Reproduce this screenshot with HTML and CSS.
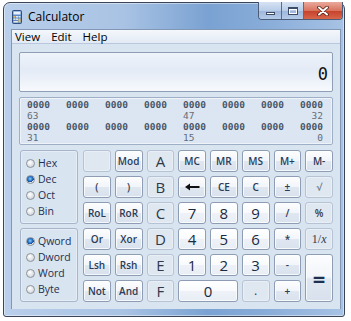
FILE: index.html
```html
<!DOCTYPE html>
<html lang="en">

<head>
    <meta charset="UTF-8">
    <title>Calculator</title>
    <link rel="stylesheet" href="styles.css">
</head>

<body>
    <div class="window">
        <div class="titlebar">
            <svg class="app-icon" width="10" height="14" viewBox="0 0 10 14">
                <rect x="0.5" y="0.5" width="9" height="13" rx="1" fill="#5b87c4" stroke="#2e4f80" />
                <rect x="1.5" y="1.5" width="7" height="3" fill="#e8f1fb" />
                <rect x="1.5" y="6" width="2" height="1.5" fill="#f3c24b" />
                <rect x="4" y="6" width="2" height="1.5" fill="#dfe9f6" />
                <rect x="6.5" y="6" width="2" height="1.5" fill="#dfe9f6" />
                <rect x="1.5" y="8.5" width="2" height="1.5" fill="#dfe9f6" />
                <rect x="4" y="8.5" width="2" height="1.5" fill="#dfe9f6" />
                <rect x="6.5" y="8.5" width="2" height="4" fill="#f3c24b" />
                <rect x="1.5" y="11" width="4.5" height="1.5" fill="#dfe9f6" />
            </svg>
            <span class="title">Calculator</span>
            <div class="caption">
                <div class="cap cap-min"><span class="min-bar"></span></div>
                <div class="cap cap-max"><span class="max-box"></span></div>
                <div class="cap cap-close">
                    <svg width="12" height="10" viewBox="0 0 12 10">
                        <path d="M2 1.5 L10 8.5 M10 1.5 L2 8.5" stroke="#5a2016" stroke-width="3.6" stroke-linecap="round" />
                        <path d="M2 1.5 L10 8.5 M10 1.5 L2 8.5" stroke="#ffffff" stroke-width="2" stroke-linecap="round" />
                    </svg>
                </div>
            </div>
        </div>

        <div class="client">
            <div class="menubar">
                <span>View</span>
                <span>Edit</span>
                <span>Help</span>
            </div>

            <div class="calc-body">
                <div class="display">0</div>

                <div class="bits">
                    <div class="bit-row val"><span>0000</span><span>0000</span><span>0000</span><span>0000</span><span>0000</span><span>0000</span><span>0000</span><span>0000</span></div>
                    <div class="bit-row"><span>63</span><span></span><span></span><span></span><span>47</span><span></span><span></span><span class="r">32</span></div>
                    <div class="bit-row val"><span>0000</span><span>0000</span><span>0000</span><span>0000</span><span>0000</span><span>0000</span><span>0000</span><span>0000</span></div>
                    <div class="bit-row"><span>31</span><span></span><span></span><span></span><span>15</span><span></span><span></span><span class="r">0</span></div>
                </div>

                <div class="keypad">
                    <div class="radio-group group-top">
                        <div class="radio"><span class="dot"></span>Hex</div>
                        <div class="radio"><span class="dot on"></span>Dec</div>
                        <div class="radio"><span class="dot"></span>Oct</div>
                        <div class="radio"><span class="dot"></span>Bin</div>
                    </div>
                    <div class="radio-group group-bottom">
                        <div class="radio"><span class="dot on"></span>Qword</div>
                        <div class="radio"><span class="dot"></span>Dword</div>
                        <div class="radio"><span class="dot"></span>Word</div>
                        <div class="radio"><span class="dot"></span>Byte</div>
                    </div>

                    <!-- row 1 -->
                    <div class="btn off"></div>
                    <div class="btn small">Mod</div>
                    <div class="btn off big">A</div>
                    <div class="btn small">MC</div>
                    <div class="btn small">MR</div>
                    <div class="btn small">MS</div>
                    <div class="btn small">M+</div>
                    <div class="btn small">M-</div>

                    <!-- row 2 -->
                    <div class="btn small">(</div>
                    <div class="btn small">)</div>
                    <div class="btn off big">B</div>
                    <div class="btn">
                        <svg width="15" height="8" viewBox="0 0 15 8">
                            <path d="M4 4 H14.5" stroke="#111" stroke-width="2" />
                            <path d="M0 4 L5 0.5 L5 7.5 Z" fill="#111" />
                        </svg>
                    </div>
                    <div class="btn small">CE</div>
                    <div class="btn small">C</div>
                    <div class="btn small">±</div>
                    <div class="btn off small dim">√</div>

                    <!-- row 3 -->
                    <div class="btn small">RoL</div>
                    <div class="btn small">RoR</div>
                    <div class="btn off big">C</div>
                    <div class="btn digit">7</div>
                    <div class="btn digit">8</div>
                    <div class="btn digit">9</div>
                    <div class="btn small">/</div>
                    <div class="btn off small">%</div>

                    <!-- row 4 -->
                    <div class="btn small">Or</div>
                    <div class="btn small">Xor</div>
                    <div class="btn off big">D</div>
                    <div class="btn digit">4</div>
                    <div class="btn digit">5</div>
                    <div class="btn digit">6</div>
                    <div class="btn small">*</div>
                    <div class="btn off small"><span class="inv">1/<i>x</i></span></div>

                    <!-- row 5 -->
                    <div class="btn small">Lsh</div>
                    <div class="btn small">Rsh</div>
                    <div class="btn off big">E</div>
                    <div class="btn digit">1</div>
                    <div class="btn digit">2</div>
                    <div class="btn digit">3</div>
                    <div class="btn small">-</div>
                    <div class="btn equals">=</div>

                    <!-- row 6 -->
                    <div class="btn small">Not</div>
                    <div class="btn small">And</div>
                    <div class="btn off big">F</div>
                    <div class="btn digit zero">0</div>
                    <div class="btn off small">.</div>
                    <div class="btn small">+</div>
                </div>
            </div>
        </div>
    </div>
</body>

</html>
```

FILE: styles.css
```css
* {
    margin: 0;
    padding: 0;
    box-sizing: border-box;
}

body {
    background-color: #ffffff;
    font-family: "Open Sans", "Noto Sans", sans-serif;
}

.window {
    width: 342px;
    height: 315px;
    margin: 2px 0 0 3px;
    border: 1px solid #3a4558;
    border-radius: 7px 7px 3px 3px;
    padding: 0 3px 7px 7px;
    display: flex;
    flex-direction: column;
    background: linear-gradient(90deg, #b9cfeb 0%, #a9c3e4 35%, #7aa2d2 60%, #86abd8 75%, #a7c2e4 100%);
    box-shadow: inset 0 0 0 1px rgba(255, 255, 255, 0.45);
}

.titlebar {
    height: 26px;
    display: flex;
    align-items: center;
    padding-left: 1px;
}

.app-icon {
    margin-top: 1px;
}

.title {
    margin-left: 6px;
    font-size: 12px;
    color: #000;
    margin-top: 1px;
}

.caption {
    display: flex;
    align-self: flex-start;
    margin-left: auto;
    margin-right: -2px;
    margin-top: -1px;
    height: 18px;
    border: 1px solid #4d5d78;
    border-top: none;
    border-radius: 0 0 4px 4px;
    overflow: hidden;
}

.cap {
    height: 100%;
    display: flex;
    align-items: center;
    justify-content: center;
}

.cap-min,
.cap-max {
    background: linear-gradient(to bottom, #d6e3f3 0%, #b9cde9 50%, #9db6da 51%, #b5cbe9 100%);
    border-right: 1px solid #5a6c8a;
}

.cap-min {
    width: 23px;
}

.cap-max {
    width: 22px;
}

.cap-close {
    width: 38px;
    background: linear-gradient(to bottom, #e9a99c 0%, #d9745f 50%, #c5402a 51%, #d6664a 100%);
}

.min-bar {
    width: 9px;
    height: 3px;
    background: #ffffff;
    border: 1px solid #3d4d68;
    margin-top: 5px;
}

.max-box {
    width: 10px;
    height: 8px;
    border: 1px solid #3d4d68;
    border-top-width: 2px;
    box-shadow: inset 0 0 0 1px #ffffff;
}

.client {
    flex: 1;
    display: flex;
    flex-direction: column;
    background-color: #d9e4f1;
    border: 1px solid #8297b4;
    border-bottom: none;
}

.menubar {
    height: 14px;
    display: flex;
    align-items: center;
    padding-left: 3px;
    background: linear-gradient(to bottom, #f4f7fb, #e2eaf5);
    border-bottom: 1px solid #b9c8dc;
    font-size: 11.5px;
    color: #000;
}

.menubar span {
    margin-right: 11px;
}

.calc-body {
    flex: 1;
    padding: 8px 7px 0 7px;
}

.display {
    height: 40px;
    border: 1px solid #8e9fb7;
    border-radius: 2px;
    background: linear-gradient(to bottom, #eef3fa 0%, #e3ebf6 45%, #f7f9fd 100%);
    font-family: "DejaVu Sans Mono", monospace;
    font-size: 17px;
    color: #111;
    display: flex;
    justify-content: flex-end;
    align-items: flex-end;
    padding: 0 4px 7px 0;
    line-height: 20px;
}

.bits {
    height: 48px;
    margin-top: 5px;
    border: 1px solid #9fb0c6;
    border-radius: 2px;
    background-color: #dce6f2;
    box-shadow: inset 0 0 0 1px #eef3f9;
    padding: 1px 9px 0 7px;
    font-family: "DejaVu Sans Mono", monospace;
    font-size: 9.5px;
    color: #626c78;
}

.bit-row {
    display: grid;
    grid-template-columns: repeat(8, 23px);
    justify-content: space-between;
    height: 11px;
    line-height: 11px;
}

.bit-row.val {
    font-weight: bold;
    color: #4a5668;
}

.bit-row .r {
    text-align: right;
}

.keypad {
    margin: 5px 0 0 1px;
    display: grid;
    grid-template-columns: 59px repeat(8, 1fr);
    grid-template-rows: repeat(6, 22px);
    gap: 4px;
}

.radio-group {
    grid-column: 1;
    width: 58px;
    border: 1px solid #a6b5ca;
    border-radius: 3px;
    box-shadow: inset 0 0 0 1px #e6edf6;
    padding: 4px 0 0 5px;
}

.group-top {
    grid-row: 1 / span 3;
}

.group-bottom {
    grid-row: 4 / span 3;
}

.radio {
    height: 16px;
    display: flex;
    align-items: center;
    font-size: 10.5px;
    color: #1e3050;
}

.dot {
    width: 9px;
    height: 9px;
    border-radius: 50%;
    border: 1px solid #8c939c;
    background: radial-gradient(circle at 40% 35%, #ffffff 0%, #e3e5e8 50%, #c3c8cf 100%);
    margin-right: 3px;
    flex-shrink: 0;
}

.dot.on {
    background: radial-gradient(circle at 45% 40%, #8fd0ff 0%, #2f7bd0 35%, #124a8a 60%, #e6e8ec 62%, #cfd3d9 100%);
}

.btn {
    border: 1px solid #8e9db3;
    border-radius: 3px;
    background: linear-gradient(to bottom, #fcfdfe 0%, #f2f5fa 48%, #e0e7f1 52%, #d8e1ed 100%);
    box-shadow: inset 0 0 0 1px rgba(255, 255, 255, 0.75);
    display: flex;
    align-items: center;
    justify-content: center;
    color: #1e3050;
    font-size: 14px;
}

.btn.small {
    font-size: 10px;
    font-weight: 600;
    color: #2a3c58;
}

.btn.digit {
    background: linear-gradient(to bottom, #ffffff 0%, #f8fafd 48%, #eef2f8 52%, #e8eef5 100%);
    font-size: 15px;
    color: #1a2a40;
}

.btn.off {
    border-color: #b5c3d5;
    background: #dfe7f1;
    box-shadow: inset 0 0 0 1px rgba(255, 255, 255, 0.35);
    color: #2f3a48;
}

.btn.big {
    font-size: 15px;
}

.btn.dim {
    color: #6d7888;
}

.inv {
    font-family: "Liberation Serif", serif;
    font-size: 12px;
    font-weight: normal;
}

.btn.equals {
    grid-column: 9;
    grid-row: 5 / span 2;
    font-size: 22px;
    font-weight: bold;
}

.btn.zero {
    grid-column: span 2;
}
```
